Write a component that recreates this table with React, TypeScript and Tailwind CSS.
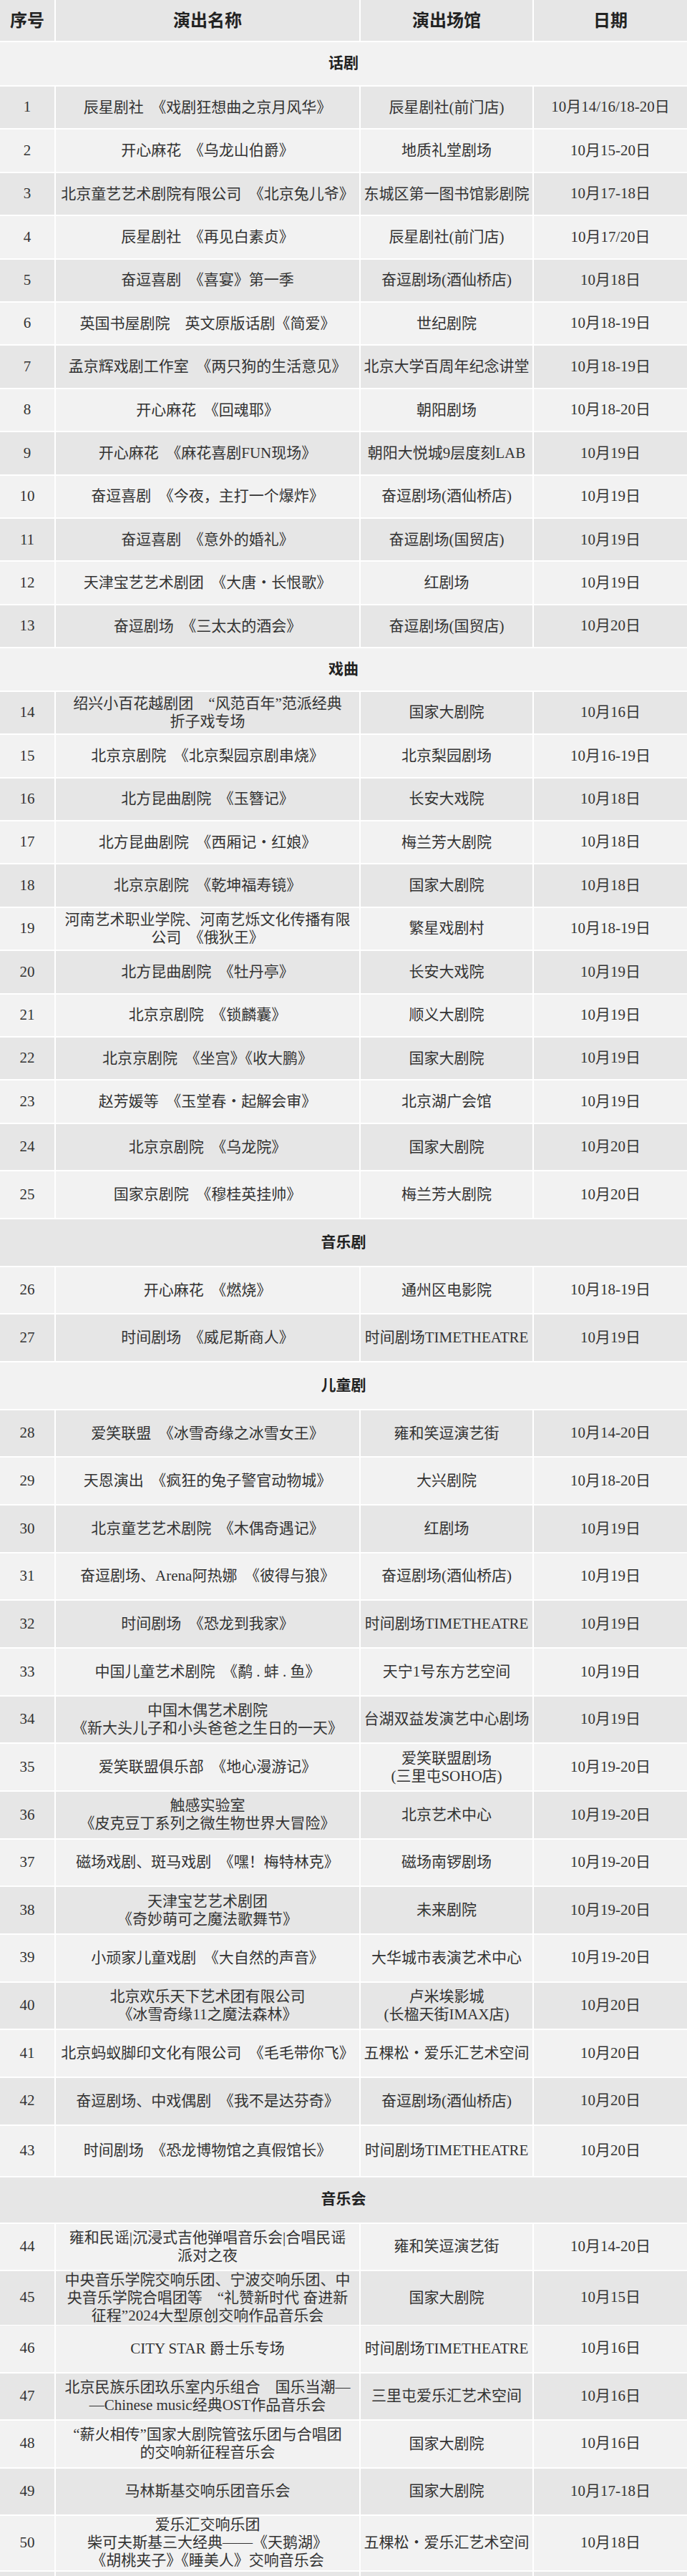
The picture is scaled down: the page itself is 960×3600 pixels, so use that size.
import React from 'react';

type Item =
  | { kind: 'section'; title: string; h: string }
  | { kind: 'row'; no: number; name: string; venue: string; date: string; h: string };

const A = 'h-[58.42px]';
const B = 'h-[64.67px]';

const s = (title: string, h: string): Item => ({ kind: 'section', title, h });
const r = (no: number, name: string, venue: string, date: string, h: string): Item => ({
  kind: 'row',
  no,
  name,
  venue,
  date,
  h,
});

const items: Item[] = [
  s('话剧', 'h-[60px]'),
  r(1, '辰星剧社　《戏剧狂想曲之京月风华》', '辰星剧社(前门店)', '10月14/16/18-20日', A),
  r(2, '开心麻花　《乌龙山伯爵》', '地质礼堂剧场', '10月15-20日', A),
  r(3, '北京童艺艺术剧院有限公司　《北京兔儿爷》', '东城区第一图书馆影剧院', '10月17-18日', A),
  r(4, '辰星剧社　《再见白素贞》', '辰星剧社(前门店)', '10月17/20日', A),
  r(5, '奋逗喜剧　《喜宴》第一季', '奋逗剧场(酒仙桥店)', '10月18日', A),
  r(6, '英国书屋剧院　英文原版话剧《简爱》', '世纪剧院', '10月18-19日', A),
  r(7, '孟京辉戏剧工作室　《两只狗的生活意见》', '北京大学百周年纪念讲堂', '10月18-19日', A),
  r(8, '开心麻花　《回魂耶》', '朝阳剧场', '10月18-20日', A),
  r(9, '开心麻花　《麻花喜剧FUN现场》', '朝阳大悦城9层度刻LAB', '10月19日', A),
  r(10, '奋逗喜剧　《今夜，主打一个爆炸》', '奋逗剧场(酒仙桥店)', '10月19日', A),
  r(11, '奋逗喜剧　《意外的婚礼》', '奋逗剧场(国贸店)', '10月19日', A),
  r(12, '天津宝艺艺术剧团　《大唐・长恨歌》', '红剧场', '10月19日', A),
  r(13, '奋逗剧场　《三太太的酒会》', '奋逗剧场(国贸店)', '10月20日', A),
  s('戏曲', A),
  r(14, '绍兴小百花越剧团　“风范百年”范派经典\n折子戏专场', '国家大剧院', '10月16日', A),
  r(15, '北京京剧院　《北京梨园京剧串烧》', '北京梨园剧场', '10月16-19日', A),
  r(16, '北方昆曲剧院　《玉簪记》', '长安大戏院', '10月18日', A),
  r(17, '北方昆曲剧院　《西厢记・红娘》', '梅兰芳大剧院', '10月18日', A),
  r(18, '北京京剧院　《乾坤福寿镜》', '国家大剧院', '10月18日', A),
  r(19, '河南艺术职业学院、河南艺烁文化传播有限\n公司　《俄狄王》', '繁星戏剧村', '10月18-19日', A),
  r(20, '北方昆曲剧院　《牡丹亭》', '长安大戏院', '10月19日', A),
  r(21, '北京京剧院　《锁麟囊》', '顺义大剧院', '10月19日', A),
  r(22, '北京京剧院　《坐宫》《收大鹏》', '国家大剧院', '10月19日', A),
  r(23, '赵芳媛等　《玉堂春・起解会审》', '北京湖广会馆', '10月19日', A),
  r(24, '北京京剧院　《乌龙院》', '国家大剧院', '10月20日', B),
  r(25, '国家京剧院　《穆桂英挂帅》', '梅兰芳大剧院', '10月20日', B),
  s('音乐剧', B),
  r(26, '开心麻花　《燃烧》', '通州区电影院', '10月18-19日', B),
  r(27, '时间剧场　《威尼斯商人》', '时间剧场TIMETHEATRE', '10月19日', B),
  s('儿童剧', B),
  r(28, '爱笑联盟　《冰雪奇缘之冰雪女王》', '雍和笑逗演艺街', '10月14-20日', B),
  r(29, '天恩演出　《疯狂的兔子警官动物城》', '大兴剧院', '10月18-20日', B),
  r(30, '北京童艺艺术剧院　《木偶奇遇记》', '红剧场', '10月19日', B),
  r(31, '奋逗剧场、Arena阿热娜　《彼得与狼》', '奋逗剧场(酒仙桥店)', '10月19日', B),
  r(32, '时间剧场　《恐龙到我家》', '时间剧场TIMETHEATRE', '10月19日', B),
  r(33, '中国儿童艺术剧院　《鹬 . 蚌 . 鱼》', '天宁1号东方艺空间', '10月19日', B),
  r(34, '中国木偶艺术剧院\n《新大头儿子和小头爸爸之生日的一天》', '台湖双益发演艺中心剧场', '10月19日', B),
  r(35, '爱笑联盟俱乐部　《地心漫游记》', '爱笑联盟剧场\n(三里屯SOHO店)', '10月19-20日', B),
  r(36, '触感实验室\n《皮克豆丁系列之微生物世界大冒险》', '北京艺术中心', '10月19-20日', B),
  r(37, '磁场戏剧、斑马戏剧　《嘿！梅特林克》', '磁场南锣剧场', '10月19-20日', B),
  r(38, '天津宝艺艺术剧团\n《奇妙萌可之魔法歌舞节》', '未来剧院', '10月19-20日', B),
  r(39, '小顽家儿童戏剧　《大自然的声音》', '大华城市表演艺术中心', '10月19-20日', B),
  r(40, '北京欢乐天下艺术团有限公司\n《冰雪奇缘11之魔法森林》', '卢米埃影城\n(长楹天街IMAX店)', '10月20日', B),
  r(41, '北京蚂蚁脚印文化有限公司　《毛毛带你飞》', '五棵松・爱乐汇艺术空间', '10月20日', B),
  r(42, '奋逗剧场、中戏偶剧　《我不是达芬奇》', '奋逗剧场(酒仙桥店)', '10月20日', B),
  r(43, '时间剧场　《恐龙博物馆之真假馆长》', '时间剧场TIMETHEATRE', '10月20日', 'h-[70px]'),
  s('音乐会', 'h-[63px]'),
  r(44, '雍和民谣|沉浸式吉他弹唱音乐会|合唱民谣\n派对之夜', '雍和笑逗演艺街', '10月14-20日', 'h-[64px]'),
  r(
    45,
    '中央音乐学院交响乐团、宁波交响乐团、中\n央音乐学院合唱团等　“礼赞新时代 奋进新\n征程”2024大型原创交响作品音乐会',
    '国家大剧院',
    '10月15日',
    'h-[74px]'
  ),
  r(46, 'CITY STAR 爵士乐专场', '时间剧场TIMETHEATRE', '10月16日', 'h-[65px]'),
  r(47, '北京民族乐团玖乐室内乐组合　国乐当潮—\n—Chinese music经典OST作品音乐会', '三里屯爱乐汇艺术空间', '10月16日', 'h-[64px]'),
  r(48, '“薪火相传”国家大剧院管弦乐团与合唱团\n的交响新征程音乐会', '国家大剧院', '10月16日', 'h-[65px]'),
  r(49, '马林斯基交响乐团音乐会', '国家大剧院', '10月17-18日', 'h-[64px]'),
  r(
    50,
    '爱乐汇交响乐团\n柴可夫斯基三大经典——《天鹅湖》\n《胡桃夹子》《睡美人》交响音乐会',
    '五棵松・爱乐汇艺术空间',
    '10月18日',
    'h-[76px]'
  ),
];

function Lines({ text }: { text: string }) {
  return (
    <div className="leading-[25px]">
      {text.split('\n').map((line, i) => (
        <div key={i} className="whitespace-nowrap">
          {line}
        </div>
      ))}
    </div>
  );
}

const cell = 'flex items-center justify-center text-center';

export default function App() {
  return (
    <div
      className="w-[960px] bg-white text-[#333] text-[21px] flex flex-col gap-[2px]"
      style={{ fontFamily: '"Liberation Serif", "Noto Sans CJK SC", serif' }}
    >
      <div className="grid grid-cols-[76px_424px_240px_1fr] gap-x-[2px] h-[57px] font-bold text-[24px] text-[#222]">
        <div className={`${cell} bg-[#e6e6e6]`}>序号</div>
        <div className={`${cell} bg-[#e6e6e6]`}>演出名称</div>
        <div className={`${cell} bg-[#e6e6e6]`}>演出场馆</div>
        <div className={`${cell} bg-[#e6e6e6]`}>日期</div>
      </div>

      {items.map((item, i) => {
        const bg = i % 2 === 0 ? 'bg-[#f2f2f2]' : 'bg-[#e6e6e6]';
        if (item.kind === 'section') {
          return (
            <div key={item.title} className={`${cell} ${bg} ${item.h} font-bold text-[#222]`}>
              {item.title}
            </div>
          );
        }
        return (
          <div key={item.no} className={`grid grid-cols-[76px_424px_240px_1fr] gap-x-[2px] ${item.h}`}>
            <div className={`${cell} ${bg}`}>{item.no}</div>
            <div className={`${cell} ${bg}`}>
              <Lines text={item.name} />
            </div>
            <div className={`${cell} ${bg}`}>
              <Lines text={item.venue} />
            </div>
            <div className={`${cell} ${bg}`}>{item.date}</div>
          </div>
        );
      })}

      <div className="grid grid-cols-[76px_424px_240px_1fr] gap-x-[2px] h-[60px]">
        <div className="bg-[#e6e6e6]" />
        <div className="bg-[#e6e6e6]" />
        <div className="bg-[#e6e6e6]" />
        <div className="bg-[#e6e6e6]" />
      </div>
    </div>
  );
}
